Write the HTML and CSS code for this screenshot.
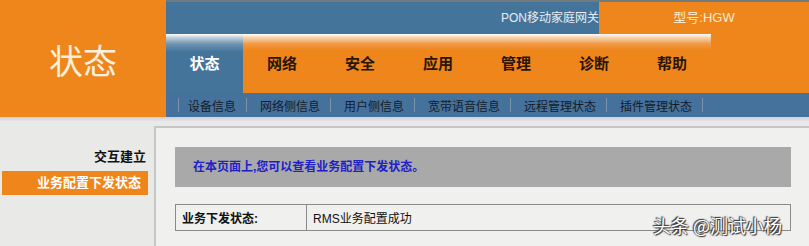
FILE: index.html
```html
<!DOCTYPE html>
<html lang="zh-CN">
<head>
  <meta charset="UTF-8">
  <title>状态 - 业务配置下发状态</title>
  <link rel="stylesheet" href="styles.css">
</head>
<body>
  <div class="header">
    <div class="logo">状态</div>
    <div class="head-right">
      <div class="topbar">
        <div class="gw-name">PON移动家庭网关</div>
        <div class="model">型号:HGW</div>
      </div>
      <div class="tabs">
        <a class="tab active">状态</a>
        <a class="tab">网络</a>
        <a class="tab">安全</a>
        <a class="tab">应用</a>
        <a class="tab">管理</a>
        <a class="tab">诊断</a>
        <a class="tab">帮助</a>
        <div class="tab-fill"></div>
      </div>
      <div class="subnav">
        <span class="sep"></span><a>设备信息</a>
        <span class="sep"></span><a>网络侧信息</a>
        <span class="sep"></span><a>用户侧信息</a>
        <span class="sep"></span><a>宽带语音信息</a>
        <span class="sep"></span><a>远程管理状态</a>
        <span class="sep"></span><a>插件管理状态</a>
        <span class="sep"></span>
      </div>
    </div>
  </div>
  <div class="stripe"></div>

  <div class="content">
    <div class="sidebar">
      <a class="side-item">交互建立</a>
      <a class="side-item current">业务配置下发状态</a>
    </div>
    <div class="panel">
      <div class="info-box">在本页面上,您可以查看业务配置下发状态。</div>
      <table class="status-table">
        <tr>
          <td class="label">业务下发状态:</td>
          <td>RMS业务配置成功</td>
        </tr>
      </table>
    </div>
  </div>

  <div class="watermark">头条 @测试小杨</div>
</body>
</html>
```

FILE: styles.css
```css
body {
  margin: 0;
  background: #e9e9e8;
  font-family: "Liberation Sans", "Noto Sans CJK SC", sans-serif;
  font-size: 12px;
  overflow: hidden;
}

.header {
  display: flex;
  height: 117px;
}

.logo {
  width: 166px;
  background: #ef861c;
  color: #fcefdc;
  font-family: "Noto Sans CJK SC", serif;
  font-size: 34px;
  display: flex;
  align-items: center;
  justify-content: center;
  padding-top: 2px;
  box-sizing: border-box;
}

.head-right {
  flex: 1;
  display: flex;
  flex-direction: column;
}

.topbar {
  display: flex;
  height: 34px;
  border-top: 2px solid #707a7f;
  box-sizing: border-box;
}

.gw-name {
  flex: 1;
  background: #44749a;
  color: #e4eef6;
  font-size: 12px;
  text-align: right;
  line-height: 32px;
}

.model {
  width: 210px;
  background: #ef861c;
  color: #fbe9d2;
  font-size: 13px;
  text-align: center;
  line-height: 32px;
}

.tabs {
  display: flex;
  height: 59px;
  background: #ef861c;
}

.tab {
  width: 78px;
  display: flex;
  align-items: center;
  justify-content: center;
  padding-bottom: 2px;
  box-sizing: border-box;
  font-size: 15px;
  font-weight: bold;
  color: #2a1406;
  background: linear-gradient(#ffffff 0px, #f6d9b8 3px, #f19a44 10px, #ef861c 16px);
}

.tab.active {
  width: 77px;
  color: #ffffff;
  background: linear-gradient(#ffffff 0px, #c9d6e0 3px, #6f93b1 10px, #44749a 18px);
}

.tab-fill {
  flex: 1;
}

.subnav {
  flex: 1;
  background: #45729d;
  display: flex;
  align-items: center;
  padding-left: 12px;
  color: #141c2a;
  font-size: 12px;
}

.subnav a {
  padding: 0 10px 0 13px;
}

.subnav .sep {
  width: 1px;
  height: 14px;
  background: #7f93a8;
}

.subnav .sep:first-child + a {
  padding-left: 9px;
}

.stripe {
  height: 4px;
  background: linear-gradient(#cfd0dc, #e4e4e6);
}

.content {
  display: flex;
  margin-top: 5px;
  height: 130px;
}

.sidebar {
  width: 148px;
  margin-right: 6px;
  padding-top: 21px;
  display: flex;
  flex-direction: column;
  gap: 4px;
}

.side-item {
  display: block;
  margin-left: 2px;
  text-align: right;
  padding-right: 2px;
  font-size: 13px;
  font-weight: bold;
  color: #111;
  line-height: 20px;
}

.side-item.current {
  background: #ef861c;
  color: #ffffff;
  line-height: 24px;
  padding-right: 7px;
}

.panel {
  flex: 1;
  background: #f0f0ee;
  border-top: 2px solid #c6c6c8;
  border-left: 2px solid #c6c6c8;
  padding: 19px 18px 0 19px;
}

.info-box {
  background: #a9a9a9;
  height: 40px;
  line-height: 40px;
  padding-left: 18px;
  color: #2020c8;
  font-size: 12px;
  font-weight: bold;
}

.status-table {
  margin-top: 17px;
  width: 616px;
  border-collapse: collapse;
  border: 1px solid #8a8a8a;
}

.status-table td {
  height: 25px;
  padding: 0 6px;
  font-size: 12px;
  color: #111;
}

.status-table td.label {
  width: 118px;
  font-weight: bold;
  border-right: 1px solid #8a8a8a;
}

.watermark {
  position: absolute;
  left: 653px;
  top: 212px;
  font-family: "Noto Sans CJK SC", sans-serif;
  font-size: 18px;
  color: #ffffff;
  text-shadow: 0 0 2px #333, 1px 1px 1px #333, -1px -1px 1px #333;
}
```
